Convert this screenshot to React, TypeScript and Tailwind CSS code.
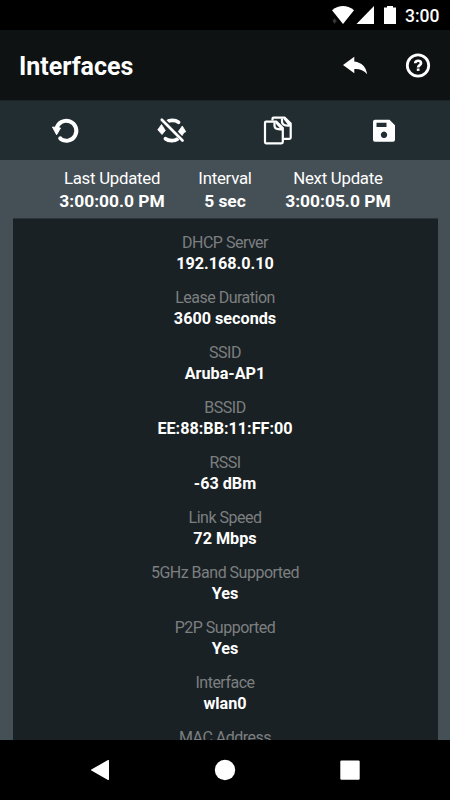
const details = [
  ["DHCP Server", "192.168.0.10"],
  ["Lease Duration", "3600 seconds"],
  ["SSID", "Aruba-AP1"],
  ["BSSID", "EE:88:BB:11:FF:00"],
  ["RSSI", "-63 dBm"],
  ["Link Speed", "72 Mbps"],
  ["5GHz Band Supported", "Yes"],
  ["P2P Supported", "Yes"],
  ["Interface", "wlan0"],
  ["MAC Address", ""],
];

function StatusBar() {
  return (
    <div className="flex h-[30px] shrink-0 items-center justify-end bg-black pr-[10px]">
      <svg width="66" height="30" viewBox="331 0 66 30" fill="#fff">
        <path d="M332 10.2Q343 1.8 354 10.2L343 24Z" />
        <path d="M356.500 24H374V6Z" />
        <path d="M387 6h6v1.500h3V24h-12V7.500h3Z" />
        <path d="M334.600 18.500v5M333.300 20h2.600v2h-2.600z" fill="none" stroke="#3c3c3c" strokeWidth="1" />
      </svg>
      <span className="ml-[8px] mt-px w-[35px] text-[17.500px] leading-[20px] font-medium">3:00</span>
    </div>
  );
}

function Header() {
  return (
    <header className="flex h-[70px] shrink-0 items-center bg-[#0e1213] pl-[19px] pr-[19px]">
      <h1 className="mt-[3px] flex-1 text-[25px] leading-[30px] font-bold">Interfaces</h1>
      <svg width="26" height="24" viewBox="342 53 26 24" fill="#fff" className="mr-[37px]">
        <path d="M343 65L354.300 56.700V61.500C362 62.500 366 67 367.200 74.200C363.500 70.200 359.500 68.800 354.300 69.100V73.300Z" />
      </svg>
      <svg width="26" height="26" viewBox="405 52 26 26" fill="none">
        <circle cx="418" cy="65.500" r="10.700" stroke="#fff" strokeWidth="2.800" />
        <path d="M415.200 63.300C415.200 59.800 421 60 421 63.200C421 65.200 418.100 65 418.100 67.500" stroke="#fff" strokeWidth="2.700" />
        <rect x="416.800" y="68.500" width="2.700" height="2.400" fill="#fff" />
      </svg>
    </header>
  );
}

function Toolbar() {
  return (
    <div className="grid h-[60px] shrink-0 grid-cols-4 items-center justify-items-center border-t border-[#1a2529] bg-[#222d32] px-[13px]">
      <svg width="32" height="32" viewBox="50 115 32 32" fill="none">
        <path d="M56.500 129A10 10 0 1 1 60 138.500" stroke="#fff" strokeWidth="4" />
        <circle cx="60.300" cy="138.200" r="2" fill="#fff" />
        <path d="M52.500 127L60.500 128L56.600 134.700Z" fill="#fff" stroke="#fff" strokeWidth="1" />
      </svg>
      <svg width="32" height="32" viewBox="156 115 32 32" fill="none">
        <path d="M166.500 122.200C169.500 120 175 119.800 178.500 122.200" stroke="#fff" strokeWidth="3.800" strokeLinecap="round" />
        <path d="M177.500 138.900C174.500 141.300 168.500 141 165.500 138.700" stroke="#fff" strokeWidth="3.800" strokeLinecap="round" />
        <path d="M161.500 124.500L165.300 130.500L162 134.500L157.800 129.800Z" fill="#fff" stroke="#fff" strokeWidth=".8" />
        <path d="M182.300 126L185.800 131.800L184 132.400L181.500 136.500L178 132Z" fill="#fff" stroke="#fff" strokeWidth=".8" />
        <path d="M163.500 120.300L183.500 140.700" stroke="#222d32" strokeWidth="4.600" />
        <path d="M161.800 119.700L182.500 140.500" stroke="#fff" strokeWidth="2.700" strokeLinecap="round" />
      </svg>
      <svg width="32" height="32" viewBox="262 113 32 32" fill="none" stroke="#fff" strokeWidth="2.200" strokeLinejoin="round">
        <path d="M272.500 118.500V116.600Q272.500 115.600 273.500 115.600H284.500L290.700 121.500V135.500Q290.700 136.800 289.500 136.800H283.500" />
        <path d="M282 116.500V119.500C282 123 285.500 123.800 290 123.500L284.500 116.500" />
        <path d="M266 119.700H276.500L282.800 126V140Q282.800 141.300 281.500 141.300H266Q265 141.300 265 140V120.800Q265 119.700 266 119.700Z" />
        <path d="M274.500 120.200V123.500C274.500 127 277.500 127.600 282.300 127.300L276.500 120.700" />
      </svg>
      <svg width="32" height="32" viewBox="368 115 32 32">
        <path fill="#fff" fillRule="evenodd" d="M375 119.700H389.500L395 125.200V139.700Q395 141.700 393 141.700H375Q373 141.700 373 139.700V121.700Q373 119.700 375 119.700ZM376.500 122.800V127H386.500V122.800ZM384 131.600a3.200 3.200 0 1 0 .01 0Z" />
      </svg>
    </div>
  );
}

function Timing({ label, value }: { label: string; value: string }) {
  return (
    <div className="text-center leading-[23px]">
      <div className="text-[16.800px] tracking-[-0.240px]">{label}</div>
      <div className="text-[17.400px] font-bold">{value}</div>
    </div>
  );
}

export default function App() {
  return (
    <div className="flex h-[800px] w-[450px] flex-col overflow-hidden bg-[#455056] font-['Roboto',sans-serif] text-white">
      <StatusBar />
      <Header />
      <Toolbar />
      <section className="flex h-[58px] shrink-0 justify-center gap-[33.500px] pt-[7px]">
        <Timing label="Last Updated" value="3:00:00.0 PM" />
        <Timing label="Interval" value="5 sec" />
        <Timing label="Next Update" value="3:00:05.0 PM" />
      </section>
      <main className="ml-[13px] mr-[12px] flex min-h-0 flex-1 flex-col gap-[13px] overflow-hidden border-t border-[#2c363a] bg-[#1a2124] pt-[13px] pr-px text-center">
        {details.map(([label, value]) => (
          <div key={label} className="shrink-0 leading-[21px]">
            <div className="text-[16px] tracking-[-0.500px] text-[#7c7f80]">{label}</div>
            <div className="text-[16.200px] font-bold">{value}</div>
          </div>
        ))}
      </main>
      <nav className="flex h-[60px] shrink-0 items-center justify-between bg-black px-[88px]">
        <svg width="24" height="24" viewBox="88 758 24 24" fill="#fff">
          <path d="M91.700 770L108.300 760.700V779.300Z" stroke="#fff" strokeWidth="1.400" strokeLinejoin="round" />
        </svg>
        <svg width="24" height="24" viewBox="213 758 24 24" fill="#fff">
          <circle cx="225" cy="770" r="10.200" />
        </svg>
        <svg width="24" height="24" viewBox="338 758 24 24" fill="#fff">
          <rect x="340.300" y="760.500" width="19.400" height="19.200" rx="1.200" />
        </svg>
      </nav>
    </div>
  );
}
